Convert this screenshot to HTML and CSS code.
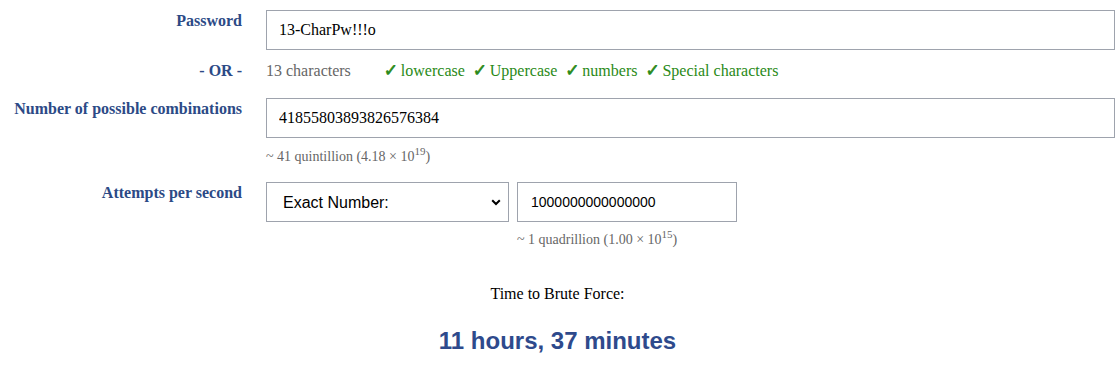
FILE: index.html
```html
<!DOCTYPE html>
<html lang="en">
<head>
    <meta charset="UTF-8">
    <meta name="viewport" content="width=device-width, initial-scale=1.0">
    <title>Password Brute Force Calculator</title>
    <link rel="stylesheet" href="styles.css">
</head>
<body>
    <div class="calculator">
        <div class="row">
            <label class="label" for="password">Password</label>
            <div class="field">
                <input type="text" id="password" class="text-input" value="13-CharPw!!!o">
            </div>
        </div>

        <div class="row row-or">
            <div class="label">- OR -</div>
            <div class="field charset">
                <span class="char-count">13 characters</span>
                <span class="check-item"><span class="check">&#10003;</span>lowercase</span>
                <span class="check-item"><span class="check">&#10003;</span>Uppercase</span>
                <span class="check-item"><span class="check">&#10003;</span>numbers</span>
                <span class="check-item"><span class="check">&#10003;</span>Special characters</span>
            </div>
        </div>

        <div class="row">
            <label class="label" for="combinations">Number of possible combinations</label>
            <div class="field">
                <input type="text" id="combinations" class="text-input" value="41855803893826576384">
                <div class="hint">~ 41 quintillion (4.18 &times; 10<sup>19</sup>)</div>
            </div>
        </div>

        <div class="row">
            <label class="label" for="rate-type">Attempts per second</label>
            <div class="field">
                <div class="rate-inputs">
                    <div class="select-wrap">
                        <select id="rate-type" class="rate-select">
                            <option>Exact Number:</option>
                        </select>
                        <svg class="select-arrow" width="10" height="7" viewBox="0 0 10 7">
                            <path d="M1.2 1.2 L5 5 L8.8 1.2" fill="none" stroke="#000" stroke-width="2"/>
                        </svg>
                    </div>
                    <input type="text" id="rate" class="rate-input" value="1000000000000000">
                </div>
                <div class="hint hint-rate">~ 1 quadrillion (1.00 &times; 10<sup>15</sup>)</div>
            </div>
        </div>

        <div class="result">
            <div class="result-title">Time to Brute Force:</div>
            <div class="result-value">11 hours, 37 minutes</div>
        </div>
    </div>
</body>
</html>
```

FILE: styles.css
```css
body {
    margin: 0;
    padding: 0;
    background: #fff;
    color: #000;
    font-family: 'Liberation Serif', 'Times New Roman', serif;
    font-size: 16px;
}

.calculator {
    padding-top: 10px;
    margin-right: 5px;
}

.row {
    display: grid;
    grid-template-columns: 242px 1fr;
    column-gap: 24px;
    margin-bottom: 11px;
}

.label {
    text-align: right;
    font-weight: bold;
    color: #2c4a86;
    padding-top: 2px;
}

.row-or {
    margin-bottom: 18px;
}

.row-or .label,
.row-or .field {
    padding-top: 0;
    line-height: 19px;
}

.text-input {
    display: block;
    width: 100%;
    box-sizing: border-box;
    height: 40px;
    margin: 0;
    padding: 0 12px;
    border: 1px solid #9ea3ad;
    border-radius: 0;
    font-family: 'Liberation Serif', 'Times New Roman', serif;
    font-size: 16px;
    color: #000;
}

/* character set summary */
.charset {
    display: flex;
    align-items: baseline;
    color: #666;
}

.char-count {
    margin-right: 33px;
}

.check-item {
    color: #2a8a17;
    margin-right: 8px;
}

.check {
    display: inline-block;
    width: 12px;
    margin-right: 5px;
    font-family: 'DejaVu Sans', sans-serif;
    font-size: 17px;
    font-weight: bold;
    -webkit-text-stroke: 0.7px #2a8a17;
}

.hint {
    margin-top: 11px;
    margin-bottom: 6px;
    font-size: 14px;
    line-height: 16px;
    color: #666;
}

.hint sup {
    font-size: 11px;
    line-height: 0;
}

.rate-inputs {
    display: flex;
    gap: 8px;
}

.select-wrap {
    position: relative;
}

.rate-select {
    display: block;
    width: 243px;
    height: 40px;
    margin: 0;
    padding: 0 24px 0 16px;
    border: 1px solid #9ea3ad;
    border-radius: 0;
    background: #fff;
    appearance: none;
    -webkit-appearance: none;
    font-family: 'Liberation Sans', Arial, sans-serif;
    font-size: 16px;
    color: #000;
}

.select-arrow {
    position: absolute;
    right: 8px;
    top: 17px;
    pointer-events: none;
}

.rate-input {
    width: 220px;
    box-sizing: border-box;
    height: 40px;
    margin: 0;
    padding: 0 13px;
    border: 1px solid #9ea3ad;
    border-radius: 0;
    font-family: 'Liberation Sans', Arial, sans-serif;
    font-size: 14px;
    color: #000;
}

.hint-rate {
    margin-left: 251px;
    margin-top: 10px;
}

.result {
    text-align: center;
    padding-top: 20px;
}

.result-title {
    font-size: 16px;
}

.result-value {
    margin-top: 24px;
    font-family: 'Liberation Sans', Arial, sans-serif;
    font-weight: bold;
    font-size: 24px;
    color: #2e4a8c;
}
```
